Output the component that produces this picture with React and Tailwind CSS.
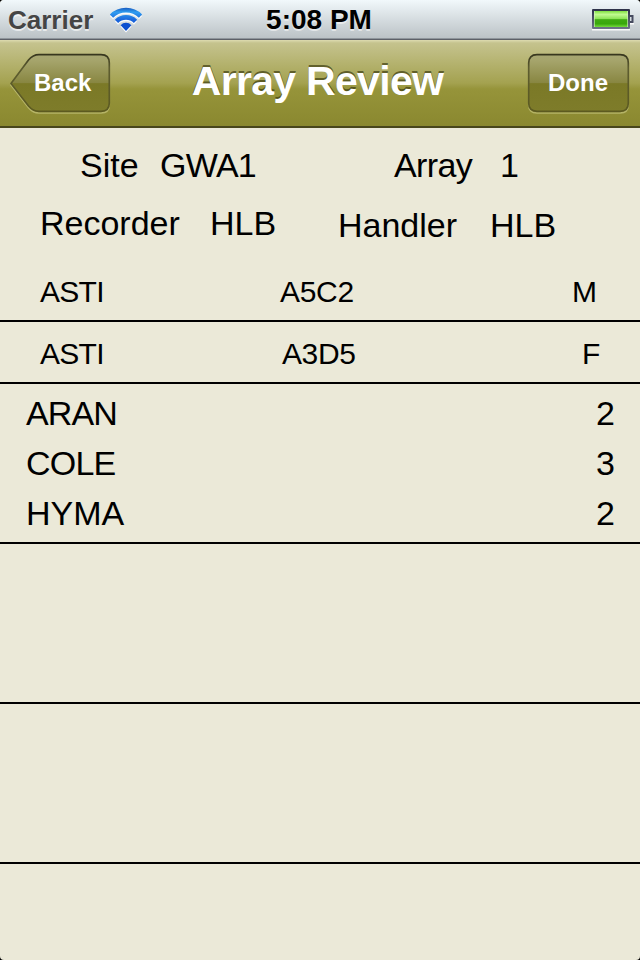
import React from "react";

function WifiIcon() {
  return (
    <svg className="mt-[7px] ml-[15px] h-[26px] w-[34px] shrink-0" viewBox="0 0 34 26">
      <defs>
        <linearGradient id="wifi" x1="0" y1="0" x2="0" y2="26" gradientUnits="userSpaceOnUse">
          <stop offset="0" stopColor="#1450b8" />
          <stop offset="0.2" stopColor="#309df0" />
          <stop offset="0.5" stopColor="#1b66dc" />
          <stop offset="1" stopColor="#0848cc" />
        </linearGradient>
      </defs>
      <g transform="translate(0 1.6)" stroke="#fff" strokeOpacity="0.85" fill="none" strokeWidth="4.4">
        <path d="M2.500 9.100a20.500 20.500 0 0 1 29 0" />
        <path d="M7.500 14.500a13.400 13.400 0 0 1 19 0" />
      </g>
      <path d="M11.500 19.400a7.400 7.400 0 0 1 11 0l-5.500 6z" fill="#fff" />
      <g stroke="url(#wifi)" fill="none" strokeWidth="4.600">
        <path d="M2.500 9.100a20.500 20.500 0 0 1 29 0" />
        <path d="M7.500 14.300a13.400 13.400 0 0 1 19 0" />
      </g>
      <path d="M11.600 18.300a7.200 7.200 0 0 1 10.800 0L17 23.900z" fill="#0b4fd0" />
    </svg>
  );
}

function BatteryIcon() {
  return (
    <svg className="mt-2 h-6 w-[42px] shrink-0" viewBox="0 0 42 24">
      <defs>
        <linearGradient id="charge" x1="0" y1="0" x2="0" y2="1">
          <stop offset="0" stopColor="#7fe040" />
          <stop offset="0.22" stopColor="#c0fa90" />
          <stop offset="0.48" stopColor="#8ee458" />
          <stop offset="0.54" stopColor="#3fab12" />
          <stop offset="0.8" stopColor="#38a70c" />
          <stop offset="1" stopColor="#74dc3c" />
        </linearGradient>
        <linearGradient id="shell" x1="0" y1="0" x2="0" y2="1">
          <stop offset="0" stopColor="#2c3048" />
          <stop offset="1" stopColor="#6e7488" />
        </linearGradient>
      </defs>
      <path d="M0 21.500h38M38 15.500h4" stroke="#fff" strokeOpacity="0.9" strokeWidth="2" />
      <rect x="0" y="1" width="38" height="20" rx="1" fill="url(#shell)" />
      <rect x="2" y="3" width="34" height="16" fill="url(#charge)" />
      <path d="M2.500 3v16M35.500 3v16" stroke="#d8f4c8" strokeOpacity="0.6" />
      <path d="M38 8h2.500v6H38" fill="none" stroke="#464b60" strokeWidth="2" />
    </svg>
  );
}

function ButtonShape({ id, width, d }) {
  return (
    <svg className="absolute top-0 left-0 h-[62px] w-full" viewBox={`0 0 ${width} 62`}>
      <defs>
        <linearGradient id={`${id}-fill`} x1="0" y1="1" x2="0" y2="59" gradientUnits="userSpaceOnUse">
          <stop offset="0" stopColor="#a7a674" />
          <stop offset="0.12" stopColor="#a5a46b" />
          <stop offset="0.5" stopColor="#888641" />
          <stop offset="0.51" stopColor="#7b7927" />
          <stop offset="1" stopColor="#7e7c2a" />
        </linearGradient>
        <linearGradient id={`${id}-edge`} x1="0" y1="0" x2="0" y2="59" gradientUnits="userSpaceOnUse">
          <stop offset="0" stopColor="#33321c" />
          <stop offset="0.25" stopColor="#5d5c30" />
          <stop offset="1" stopColor="#5c5a20" />
        </linearGradient>
      </defs>
      <path d={d} transform="translate(0 1.7)" fill="none" stroke="#c6c47e" strokeOpacity="0.7" strokeWidth="1.5" />
      <path d={d} fill={`url(#${id}-fill)`} stroke={`url(#${id}-edge)`} strokeWidth="1.7" />
    </svg>
  );
}

function StatusBar() {
  return (
    <div className="flex h-10 border-b border-[#5d6068] bg-linear-to-b from-[#f1f8fb] to-[#bac1c5] font-bold shadow-[inset_0_-1px_0_#8e959b]">
      <div className="flex flex-1 pl-2">
        <span className="w-[86px] text-[26px] leading-10 text-[#454545] [text-shadow:0_2px_0_rgba(255,255,255,.6)]">Carrier</span>
        <WifiIcon />
      </div>
      <span className="mr-[2px] -ml-[2px] text-[28px] leading-[39px] text-black [text-shadow:0_2px_0_rgba(255,255,255,.5)]">5:08 PM</span>
      <div className="flex flex-1 justify-end pr-1.5">
        <BatteryIcon />
      </div>
    </div>
  );
}

function NavBar() {
  return (
    <div className="flex h-22 items-start justify-between border-b-2 border-[#48461b] bg-[linear-gradient(#dddbb0_0,#c5c38e_3px,#a4a250_43px,#96943a_49px,#8a882f_100%)] pr-2.5 pl-2.5 font-bold text-white [text-shadow:0_-2px_0_rgba(50,50,10,.65)]">
      <button className="relative mt-[13px] h-[62px] w-[101px] pb-0.5 pl-6 text-left text-2xl leading-[58px]">
        <ButtonShape
          id="back"
          width={101}
          d="M1 30.500L18.500 7Q23 1.700 29 1.700H91Q99.300 1.700 99.300 10V50Q99.300 58.300 91 58.300H29Q23 58.300 18.500 53Z"
        />
        <span className="relative">Back</span>
      </button>
      <h1 className="-mr-[1px] -ml-[4px] text-[41px] leading-[82px] tracking-[-0.7px] [text-shadow:0_-2px_0_rgba(50,50,10,.65)]">Array Review</h1>
      <button className="relative mt-[13px] h-[62px] w-[103px] pr-[1px] pb-0.5 text-center text-2xl leading-[58px]">
        <ButtonShape
          id="done"
          width={103}
          d="M10 1.700H93Q101.300 1.700 101.300 10V50Q101.300 58.300 93 58.300H10Q1.700 58.300 1.700 50V10Q1.700 1.700 10 1.700Z"
        />
        <span className="relative">Done</span>
      </button>
    </div>
  );
}

function Summary() {
  return (
    <div className="h-33 pt-[17px] text-[34px] leading-10">
      <div className="flex h-[58px] pl-20">
        <span className="w-20">Site</span>
        <span className="w-[234px] tracking-[-0.7px]">GWA1</span>
        <span className="w-[106px] tracking-[-0.6px]">Array</span>
        <span>1</span>
      </div>
      <div className="flex pl-10">
        <span className="w-[170px]">Recorder</span>
        <span className="w-32">HLB</span>
        <span className="mt-0.5 w-38">Handler</span>
        <span className="mt-0.5">HLB</span>
      </div>
    </div>
  );
}

function AnimalRow({ code, band, sex, bandClass }) {
  return (
    <div className="flex h-[62px] border-b-2 border-black pt-3 pl-10 text-[30px] leading-10">
      <span className="w-60 tracking-[-0.7px]">{code}</span>
      <span className={bandClass}>{band}</span>
      <span>{sex}</span>
    </div>
  );
}

const counts = [
  { name: "ARAN", count: 2, nameClass: "tracking-[-0.9px]" },
  { name: "COLE", count: 3, nameClass: "tracking-[-0.8px]" },
  { name: "HYMA", count: 2, nameClass: "" },
];

export default function App() {
  return (
    <div className="h-[960px] w-[640px] bg-black">
      <div className="h-full overflow-hidden rounded-[4px] bg-[#ebe9d8] font-['Liberation_Sans',Arial,sans-serif] text-black">
        <StatusBar />
        <NavBar />
        <Summary />
        <AnimalRow code="ASTI" band="A5C2" sex="M" bandClass="w-[292px] tracking-[-0.3px]" />
        <AnimalRow code="ASTI" band="A3D5" sex="F" bandClass="ml-0.5 w-[300px] tracking-[-0.4px]" />
        <div className="h-40 border-b-2 border-black pt-[9px] pr-[25px] pl-[26px] text-[34px] leading-10">
          {counts.map(({ name, count, nameClass }) => (
            <div key={name} className="flex h-[50px] justify-between">
              <span className={nameClass}>{name}</span>
              <span>{count}</span>
            </div>
          ))}
        </div>
        <div className="h-40 border-b-2 border-black" />
        <div className="h-40 border-b-2 border-black" />
      </div>
    </div>
  );
}
